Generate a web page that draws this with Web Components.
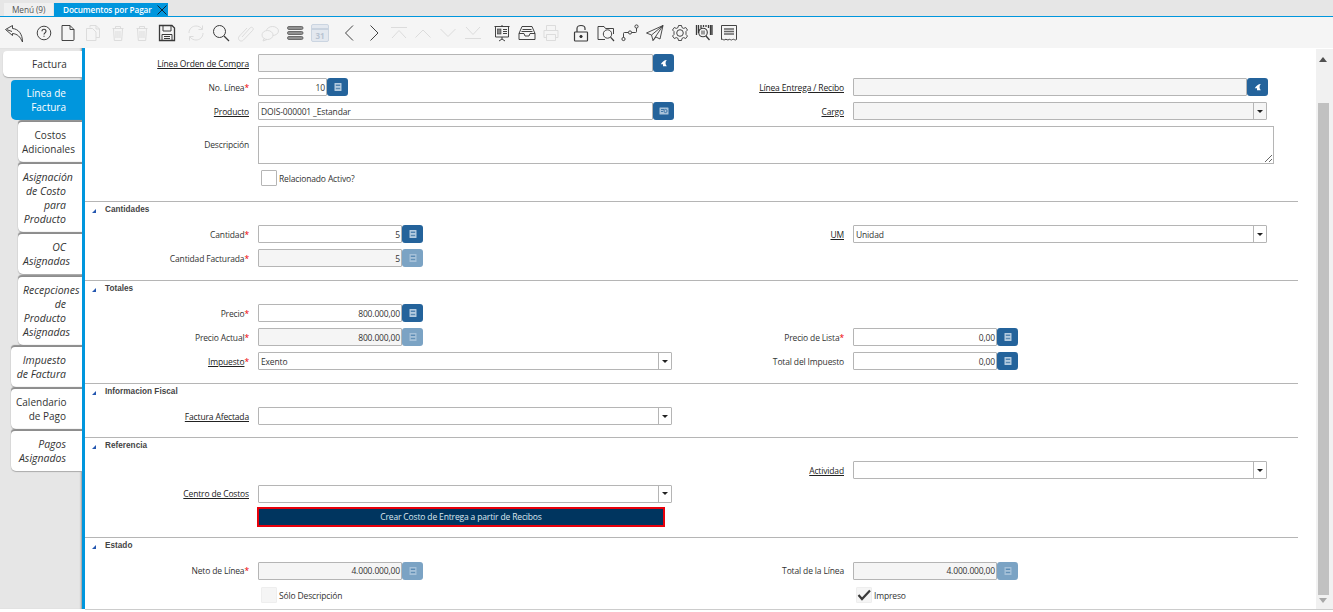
<!DOCTYPE html>
<html lang="es"><head><meta charset="utf-8"><title>Documentos por Pagar</title>
<style>
html,body{margin:0;padding:0;background:#fff;height:612px;overflow:hidden;font-family:"Open Sans",sans-serif;color:#333}
</style></head><body>
<ui-window>
  <ui-tabstrip slot="top">
    <ui-doctab>Menú (9)</ui-doctab>
    <ui-doctab active closable>Documentos por Pagar</ui-doctab>
  </ui-tabstrip>
  <ui-toolbar slot="top">
    <ui-tool icon="undo"></ui-tool><ui-tool icon="help" gap></ui-tool><ui-tool icon="new"></ui-tool><ui-tool icon="copy" off></ui-tool><ui-tool icon="trash" off></ui-tool><ui-tool icon="trash" off></ui-tool><ui-tool icon="save"></ui-tool><ui-tool icon="refresh" off gap></ui-tool><ui-tool icon="find"></ui-tool><ui-tool icon="clip" off></ui-tool><ui-tool icon="chat" off></ui-tool><ui-tool icon="menu"></ui-tool><ui-tool icon="cal" off></ui-tool><ui-tool icon="back" gap></ui-tool><ui-tool icon="next"></ui-tool><ui-tool icon="first" off></ui-tool><ui-tool icon="up" off></ui-tool><ui-tool icon="down" off></ui-tool><ui-tool icon="last" off></ui-tool><ui-tool icon="board" gap></ui-tool><ui-tool icon="inbox"></ui-tool><ui-tool icon="print" off></ui-tool><ui-tool icon="lock" gap></ui-tool><ui-tool icon="folder"></ui-tool><ui-tool icon="flow"></ui-tool><ui-tool icon="send"></ui-tool><ui-tool icon="gear"></ui-tool><ui-tool icon="barcode"></ui-tool><ui-tool icon="receipt"></ui-tool>
  </ui-toolbar>
  <ui-sidebar slot="side">
    <ui-sidetab level="0" h="26">Factura</ui-sidetab>
    <ui-sidetab level="1" h="40" active gap="3">Línea de Factura</ui-sidetab>
    <ui-sidetab level="2" h="40" gap="2">Costos Adicionales</ui-sidetab>
    <ui-sidetab level="2" h="68" gap="2" it>Asignación de Costo para Producto</ui-sidetab>
    <ui-sidetab level="2" h="40" gap="2" it>OC Asignadas</ui-sidetab>
    <ui-sidetab level="2" h="68" gap="3" it>Recepciones de Producto Asignadas</ui-sidetab>
    <ui-sidetab level="1" h="40" gap="2" it>Impuesto de Factura</ui-sidetab>
    <ui-sidetab level="1" h="40" gap="2">Calendario de Pago</ui-sidetab>
    <ui-sidetab level="1" h="40" gap="2" it>Pagos Asignados</ui-sidetab>
  </ui-sidebar>
  <ui-section pad="11" first>
    <ui-row><ui-cell label="Línea Orden de Compra" link><ui-field w="395" ro btn="zoom"></ui-field></ui-cell></ui-row>
    <ui-row>
      <ui-cell label="No. Línea" req><ui-field w="69" num value="10" btn="calc"></ui-field></ui-cell>
      <ui-cell label="Línea Entrega / Recibo" link><ui-field w="394" ro btn="zoom"></ui-field></ui-cell>
    </ui-row>
    <ui-row>
      <ui-cell label="Producto" link><ui-field w="395" value="DOIS-000001 _Estandar" btn="search"></ui-field></ui-cell>
      <ui-cell label="Cargo" link><ui-field w="414" ro combo></ui-field></ui-cell>
    </ui-row>
    <ui-row h="43"><ui-cell wide label="Descripción"><ui-memo></ui-memo></ui-cell></ui-row>
    <ui-row><ui-cell><ui-check>Relacionado Activo?</ui-check></ui-cell></ui-row>
  </ui-section>
  <ui-section heading="Cantidades" pad="10">
    <ui-row>
      <ui-cell label="Cantidad" req><ui-field w="144" num value="5" btn="calc"></ui-field></ui-cell>
      <ui-cell label="UM" link><ui-field w="414" combo value="Unidad"></ui-field></ui-cell>
    </ui-row>
    <ui-row><ui-cell label="Cantidad Facturada" req><ui-field w="144" num ro value="5" btn="calc" dis></ui-field></ui-cell></ui-row>
  </ui-section>
  <ui-section heading="Totales" pad="10">
    <ui-row><ui-cell label="Precio" req><ui-field w="144" num value="800.000,00" btn="calc"></ui-field></ui-cell></ui-row>
    <ui-row>
      <ui-cell label="Precio Actual" req><ui-field w="144" num ro value="800.000,00" btn="calc" dis></ui-field></ui-cell>
      <ui-cell label="Precio de Lista" req><ui-field w="144" num value="0,00" btn="calc"></ui-field></ui-cell>
    </ui-row>
    <ui-row>
      <ui-cell label="Impuesto" req link><ui-field w="414" combo value="Exento"></ui-field></ui-cell>
      <ui-cell label="Total del Impuesto"><ui-field w="144" num value="0,00" btn="calc"></ui-field></ui-cell>
    </ui-row>
  </ui-section>
  <ui-section heading="Informacion Fiscal" pad="9">
    <ui-row><ui-cell label="Factura Afectada" link><ui-field w="414" combo></ui-field></ui-cell></ui-row>
  </ui-section>
  <ui-section heading="Referencia" pad="8">
    <ui-row><ui-cell></ui-cell><ui-cell label="Actividad" link><ui-field w="414" combo></ui-field></ui-cell></ui-row>
    <ui-row h="23"><ui-cell label="Centro de Costos" link><ui-field w="414" combo></ui-field></ui-cell></ui-row>
    <ui-row><ui-cell><ui-action>Crear Costo de Entrega a partir de Recibos</ui-action></ui-cell></ui-row>
  </ui-section>
  <ui-section heading="Estado" pad="1">
    <ui-row h="25">
      <ui-cell label="Neto de Línea" req><ui-field w="144" num ro value="4.000.000,00" btn="calc" dis></ui-field></ui-cell>
      <ui-cell label="Total de la Línea"><ui-field w="144" num ro value="4.000.000,00" btn="calc" dis></ui-field></ui-cell>
    </ui-row>
    <ui-row>
      <ui-cell><ui-check faint>Sólo Descripción</ui-check></ui-cell>
      <ui-cell><ui-check faint checked>Impreso</ui-check></ui-cell>
    </ui-row>
  </ui-section>
</ui-window>
<script>
const ICONS={
undo:'<path d="M1.5 6.5 8.5 2.5V5.5C14.5 6 18.5 11 18.5 19 16 13.5 13.5 11 8.5 10.5V12.5Z" fill="none"/><path d="M3 6.7 8 8.5"/>',
help:'<circle cx="10" cy="10" r="6.8"/><path d="M8 8.2c0-2.7 4-2.7 4 0 0 1.7-2 1.7-2 3.4M10 12.7v1" stroke-width="1.1"/>',
new:'<path d="M4 2.5H12L16 6.5V16.5Q16 17.5 15 17.5H4ZM12 2.5V6.5H16" />',
copy:'<path d="M7 4.5V2.5H13L16.5 6V14.5H13M3.5 5.5H9.5L13 9V17.5H3.5ZM13 2.5V6H16.5"/>',
trash:'<path d="M4.5 5.5H15.5M7.5 5.5V3.5H12.5V5.5M5.5 5.5 6.3 17.5H13.7L14.5 5.5M8 8V15M10 8V15M12 8V15"/>',
save:'<path d="M2.5 2.5H15L17.5 5V17.5H2.5Z" stroke-width="1.3"/><path d="M6 2.5V8H14V2.5M5 17.5V11.5H15V17.5M7 13.5H13M7 15.5H13" stroke-width="1"/>',
refresh:'<path d="M3 10C3 5.5 6.5 3 10 3 12.5 3 14.5 4 16 6M17 10C17 14.5 13.5 17 10 17 7.5 17 5.5 16 4 14M16.5 2.5V6.5H12.5M3.5 17.5V13.5H7.5"/>',
find:'<circle cx="8.5" cy="8.5" r="6" stroke-width="1"/><path d="M13 13 18 18" stroke-width="1.2"/>',
clip:'<path d="M6 14 14 5C16 3 18.5 5.5 16.5 7.5L7.5 17C4.5 20 0.5 16 3.5 13L11 5"/>',
chat:'<ellipse cx="12.5" cy="8" rx="6" ry="4.5"/><ellipse cx="7.5" cy="12" rx="5.5" ry="4.5" fill="#f5f5f5"/><path d="M4 15.5 3 18 7 16.5"/>',
menu:'<rect x="2.5" y="3.5" width="15.5" height="3" rx="1.4" fill="#909090" stroke="#555" stroke-width=".8"/><rect x="2.5" y="8.5" width="15.5" height="3" rx="1.4" fill="#909090" stroke="#555" stroke-width=".8"/><rect x="2.5" y="13.5" width="15.5" height="3" rx="1.4" fill="#909090" stroke="#555" stroke-width=".8"/>',
cal:'<rect x="1.5" y="1.5" width="17" height="17" rx="1.5" fill="#e3e8ef" stroke="#c9d3df"/><path d="M1.5 6H18.5" stroke="#c9d3df" stroke-width="2"/><text x="10" y="15.5" text-anchor="middle" font-size="8" font-family="Open Sans" font-weight="700" fill="#b9c4d2" stroke="none">31</text>',
back:'<path d="M14 2.5 6.5 10 14 17.5"/>',
next:'<path d="M6.5 2.5 14 10 6.5 17.5"/>',
first:'<path d="M2 4.5H18M3 15 10 7.5 17 15"/>',
up:'<path d="M2.5 14.5 10 7 17.5 14.5"/>',
down:'<path d="M2.5 6 10 13.5 17.5 6"/>',
last:'<path d="M3 4 10 11.5 17 4M2 15.5H18"/>',
board:'<path d="M2.5 3.5H17.5M3.5 3.5V14H16.5V3.5M10 2V3.5M10 14V16M7 18 10 16 13 18"/><rect x="5.5" y="6" width="3.5" height="5" fill="#888" stroke="#333" stroke-width=".6"/><path d="M11 6.5H15M11 8.5H15M11 10.5H15"/>',
inbox:'<path d="M2 10.5 5 3.5H15L18 10.5V16.5H2ZM2 10.5H7L8 13H12L13 10.5H18M5.5 6.5H14.5M4.5 8.5H15.5"/>',
print:'<path d="M5.5 7V2.5H14.5V7M5.5 14.5H3V7.5H17V14.5H14.5M5.5 11.5H14.5V17.5H5.5Z"/>',
lock:'<rect x="3.5" y="9" width="13" height="9" rx=".8" stroke-width="1.2"/><path d="M6 9V5.5C6 1.5 14 1.5 14 5.5V7" stroke-width="1.2"/><circle cx="10" cy="13.5" r="1.2" fill="#333"/>',
folder:'<path d="M2 16.5V3.5H8L9.5 5.5H17.5V11M2 16.5H9"/><circle cx="11.5" cy="11" r="4.2"/><path d="M14.5 14.2 18 18" stroke-width="1.2"/>',
flow:'<circle cx="3.5" cy="16" r="1.6"/><circle cx="10" cy="9.5" r="1.6"/><circle cx="16.5" cy="3.5" r="1.6"/><path d="M3.5 14.4V10.5Q3.5 9.5 4.5 9.5H8.4M11.6 9.5H15.5Q16.5 9.5 16.5 8.5V5.1"/>',
send:'<path d="M18 2.5 1.5 10 6.5 12 8 17.5 11 14 15 16ZM18 2.5 6.5 12M18 2.5 8 17.5" stroke-width=".9"/>',
gear:'<path d="M8.5 2.5H11.5L12 4.6 13.7 5.4 15.7 4.5 17.5 7 16 8.5V11.5L17.5 13 15.7 15.5 13.7 14.6 12 15.4 11.5 17.5H8.5L8 15.4 6.3 14.6 4.3 15.5 2.5 13 4 11.5V8.5L2.5 7 4.3 4.5 6.3 5.4 8 4.6Z" stroke-width=".9"/><circle cx="10" cy="10" r="3.3"/>',
barcode:'<path d="M2.5 2V12M4.5 2V10M7 2V5M9.5 2V4M12 2V4M14.5 2V5M16.5 2V12M18 2V12" stroke-width="1.3"/><circle cx="9" cy="9.5" r="4.3" stroke-width="1.1"/><path d="M8 7.5V11.5M10 7.5V11.5"/><path d="M12 13 15.5 17" stroke-width="1.3"/>',
receipt:'<path d="M2.5 2.5H17.5V16.5C16 18 15 15.5 13.5 16.5 12 18 11 15.5 10 16.5 8.5 18 7.5 15.5 6 16.5 5 18 3.5 15.5 2.5 16.5Z"/><path d="M5 6H15M5 8.5H15M5 11H15" stroke-width="1.4" stroke="#666"/>'
};
const def=(name,css,html,extra={})=>{
  const t=document.createElement('template');
  t.innerHTML='<style>'+css+'</style>'+html;
  customElements.define(name,class extends HTMLElement{
    constructor(){super();this.attachShadow({mode:'open'}).appendChild(t.content.cloneNode(true));}
    connectedCallback(){extra.init&&extra.init.call(this,this.shadowRoot);}
  });
};
def('ui-window',`:host{display:grid;grid-template-columns:82px 3px 1fr 17px;grid-template-rows:17px 31px 562px;height:610px;width:1333px;font:8.5px "Open Sans",sans-serif;letter-spacing:-.15px;color:#333;box-sizing:border-box}
.top{display:contents}.line{background:#0096dd;grid-row:3;height:561px}.main{grid-row:3;padding:3px 18px 0 0;overflow:hidden;border-bottom:1px solid #ccc;box-sizing:border-box}
.side{grid-row:3;display:block}.bar{grid-row:3;background:#f1f1f1;position:relative;border-bottom:1px solid #ccc;margin-top:1px;box-sizing:border-box}
.thumb{position:absolute;left:2px;width:11px;top:54px;bottom:14px;background:#c1c1c1}
.au,.ad{position:absolute;left:3px;width:0;height:0;border:4px solid transparent}.au{top:4px;border-bottom:5px solid #505050}.ad{bottom:2px;border-top:5px solid #a8a8a8}
::slotted([slot=top]){grid-column:1/-1}`,
`<div class="top"><slot name="top"></slot></div><div class="side"><slot name="side"></slot></div><div class="line"></div><div class="main"><slot></slot></div><div class="bar"><i class="au"></i><div class="thumb"></div><i class="ad"></i></div>`);
def('ui-tabstrip',`:host{display:flex;align-items:flex-end;height:17px;box-sizing:border-box;background:#e6e6e6;border-bottom:1px solid #0096dd;padding-left:4px;gap:1px}`,`<slot></slot>`);
def('ui-doctab',`:host{display:flex;align-items:center;box-sizing:border-box;width:49px;height:13px;padding:0 0 0 8px;background:#f0f0f0;color:#555;font-size:8.3px;letter-spacing:-.1px;white-space:nowrap}
:host([active]){background:#0096dd;color:#fff;font-weight:600;padding:0 0 0 9px;width:114px;font-size:8.2px}
svg{display:none;margin-left:auto;margin-right:1px}:host([closable]) svg{display:block}`,
`<slot></slot><svg width="10" height="10" viewBox="0 0 10 10"><path d="M.5.5 9.5 9.5M9.5.5.5 9.5" stroke="#123" fill="none"/></svg>`);
def('ui-toolbar',`:host{display:flex;align-items:center;height:31px;background:#f5f5f5;padding-left:1.7px;box-sizing:border-box}`,`<slot></slot>`);
def('ui-tool',`:host{display:flex;justify-content:center;width:24.65px;height:20px;color:#3a3a3a}
:host([gap]){margin-left:5px}:host([off]){color:#dadada}svg{width:20px;height:20px;display:block;fill:none;stroke:currentColor;stroke-width:.95}`,
`<svg viewBox="0 0 20 20"></svg>`,{init(r){r.querySelector('svg').innerHTML=ICONS[this.getAttribute('icon')]||'';}});
def('ui-sidebar',`:host{display:flex;flex-direction:column;height:561px;background:#e6e6e6;padding-top:3px;box-sizing:border-box;box-shadow:inset -2px 0 2px -1px #9a9a9a}`,`<slot></slot>`);
def('ui-sidetab',`:host{display:block;box-sizing:border-box;background:#fff;color:#333;font-size:10px;letter-spacing:0;line-height:14px;text-align:right;border-radius:4px 0 0 5px;padding:6px 16px 0 4px;box-shadow:0 -2px 1px -0.5px #8d8d8d,0 1px 1px #aaa}
:host([level="0"]){margin-left:3px;padding-left:29px;padding-top:6px;box-shadow:0 1px 1px #aaa}
:host([level="1"]){margin-left:11px;padding-left:5px}:host([level="2"]){margin-left:18px}
:host([active]){background:#0096dd;color:#fff;box-shadow:none}:host([it]){font-style:italic;font-size:10.5px}:host([it][level="2"]){padding-left:5px}`,
`<slot></slot>`,{init(){this.style.height=this.getAttribute('h')+'px';this.style.marginTop=(this.getAttribute('gap')||0)+'px';}});
def('ui-section',`:host{display:block;border-top:1px solid #b5b5b5}:host([first]){border-top:0}
.h{display:none;height:20px;position:relative;font-weight:700;font-family:"Liberation Sans",sans-serif;font-size:8.2px;letter-spacing:.02px;color:#444;line-height:16px;padding-left:20px}
:host([heading]) .h{display:block}
.h i{position:absolute;left:7px;top:7px;width:4px;height:4px;background:#2457b0;clip-path:polygon(100% 0,100% 100%,0 100%)}`,
`<div class="h"><i></i><span></span></div><slot></slot>`,{init(r){r.querySelector('span').textContent=this.getAttribute('heading')||'';this.style.paddingBottom=(this.getAttribute('pad')||0)+'px';}});
def('ui-row',`:host{display:grid;grid-template-columns:595px 1fr;height:24px}`,`<slot></slot>`,{init(){if(this.hasAttribute('h'))this.style.height=this.getAttribute('h')+'px';}});
def('ui-cell',`:host{display:flex;align-items:center;min-width:0}:host([wide]){grid-column:1/-1}
.l{width:164px;margin-right:9px;text-align:right;flex:none;white-space:nowrap}
.t.link{text-decoration:underline;color:#222}.r{color:#e00;display:none}`,
`<div class="l"><span class="t"></span><span class="r">*</span></div><slot></slot>`,
{init(r){r.querySelector('.t').textContent=this.getAttribute('label')||'';if(this.hasAttribute('link'))r.querySelector('.t').classList.add('link');if(this.hasAttribute('req'))r.querySelector('.r').style.display='inline';}});
def('ui-field',`:host{display:inline-flex;align-items:center;height:18px}
.b{box-sizing:border-box;height:18px;border:1px solid #b5b5b5;background:#fff;display:flex;align-items:center;overflow:hidden;border-radius:1px}
:host([ro]) .b{background:#f5f5f5}
.v{flex:1;padding:0 1px 0 2px;white-space:nowrap;color:#333}:host([num]) .v{text-align:right}
.a{display:none;width:12px;height:16px;border-left:1px solid #b5b5b5;align-items:center;justify-content:center;flex:none}
:host([combo]) .a{display:flex}.a i{width:0;height:0;border:3px solid transparent;border-top:3.5px solid #222;margin-top:3px}
.btn{display:none;width:21px;height:18px;background:#24639b;border-radius:3px;align-items:center;justify-content:center;flex:none}
:host([btn]) .btn{display:flex}:host([dis]) .btn{background:#7ba3c4}:host([dis]) svg{opacity:.75}`,
`<div class="b"><div class="v"></div><div class="a"><i></i></div></div><div class="btn"><svg width="10" height="10" viewBox="0 0 10 10"></svg></div>`,
{init(r){r.querySelector('.b').style.width=this.getAttribute('w')+'px';r.querySelector('.v').textContent=this.getAttribute('value')||'';
const g={calc:'<rect x="1.5" y="1" width="7" height="8" rx=".6" fill="#b5cce0"/><path d="M2.8 3.2H7.2" stroke="#24639b" stroke-width="1"/><path d="M2.8 6.5H7.2" stroke="#5a8ab3" stroke-width="1.4"/>',
zoom:'<path d="M7.8 2C5.2 2.2 3.4 3.5 1.8 6.2H4V8.2H7.8C6.2 6.6 6 4 7.8 2Z" fill="#fff"/>',
search:'<rect x=".5" y="1.5" width="9" height="7" rx=".5" fill="#a9c3da"/><path d="M2 3.5H5M2 5.5H4" stroke="#24639b" stroke-width=".8"/><circle cx="6.5" cy="5" r="1.6" fill="none" stroke="#24639b" stroke-width=".8"/>'};
r.querySelector('svg').innerHTML=g[this.getAttribute('btn')]||'';}});
def('ui-memo',`:host{display:block;width:1016px;height:38px}textarea{display:block;box-sizing:border-box;width:1016px;height:38px;border:1px solid #b5b5b5;border-radius:0;padding:0;margin:0;outline:0;background:#fff}`,`<textarea aria-label="Descripción"></textarea>`);
def('ui-check',`:host{display:flex;align-items:center;margin-left:3px;gap:2px}
.c{width:16px;height:16px;box-sizing:border-box;border:1px solid #b5b5b5;border-radius:1px;background:#fff;display:flex;align-items:center;justify-content:center}
:host([faint]) .c{border-color:#eee;background:#f5f5f5}svg{display:none}:host([checked]) svg{display:block}`,
`<div class="c"><svg width="14" height="12" viewBox="0 0 14 12"><path d="M1.5 6 5 10 13 1.5" fill="none" stroke="#3a3a3a" stroke-width="2.2"/></svg></div><span><slot></slot></span>`);
def('ui-action',`:host{display:block;box-sizing:border-box;width:408px;height:20px;margin-left:-1px;background:#00355f;border:2px solid #e8000b;color:#dce6ee;text-align:center;line-height:16px}`,`<slot></slot>`);
</script>
</body></html>
